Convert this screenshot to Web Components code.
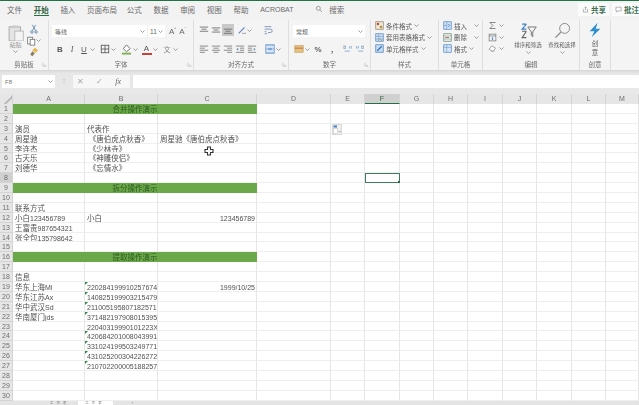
<!DOCTYPE html>
<html lang="zh">
<head>
<meta charset="utf-8">
<title>Excel</title>
<style>
	html, body { margin: 0; padding: 0; background: #fff; }
</style>
</head>
<body>
<excel-app></excel-app>
<script>
// icons used in the ribbon, all on a 12x12 box
const ICONS = {
	paste: '<rect x="1.5" y="2" width="8" height="10" fill="#e4e4e4" stroke="#aaa" stroke-width=".7"/><rect x="3.5" y="1" width="4" height="2" fill="#ccc"/><rect x="5.5" y="5" width="6" height="7" fill="#f4f4f4" stroke="#bbb" stroke-width=".7"/>',
	cut: '<path d="M4 1l4 7M8 1L4 8" stroke="#5a7fa8" fill="none"/><circle cx="3.5" cy="9.5" r="1.5" fill="none" stroke="#5a7fa8"/><circle cx="8.5" cy="9.5" r="1.5" fill="none" stroke="#5a7fa8"/>',
	copy: '<rect x="2" y="1.5" width="6" height="8" fill="#fff" stroke="#777"/><rect x="5" y="4" width="5.5" height="7" fill="#fff" stroke="#777"/>',
	brush: '<path d="M7 1l4 3-3 3-4-3z" fill="#e8b84a"/><path d="M4 5l3 2.5L4 11 1.5 9z" fill="#8a7d5c"/>',
	launch: '<path d="M2 2v8h8" fill="none" stroke="#999" stroke-width="1"/><path d="M6 6l4 4" stroke="#999"/>',
	border: '<rect x="1.5" y="1.5" width="9" height="9" fill="none" stroke="#555"/><path d="M6 1.5v9M1.5 6h9" stroke="#555"/>',
	fill: '<path d="M6 1l4 4-4 3.5L2.500 5z" fill="#fff" stroke="#666"/><rect x="1" y="9.500" width="10" height="2" fill="#7fb24f"/>',
	top: '<path d="M1 2.500h10M3 5h6M1 7.500h10" stroke="#666"/>',
	mid: '<path d="M1 3.500h10M3 6h6M1 8.500h10" stroke="#666"/>',
	bot: '<path d="M1 5h10M3 7.500h6M1 10h10" stroke="#666"/>',
	orient: '<path d="M2 10l7-7" stroke="#6c8fbf" stroke-width="1.500"/><path d="M6 10h5" stroke="#999"/>',
	wrap: '<path d="M2 2h8M2 5h7a1.500 1.500 0 010 4H6M2 8h2M2 10.500h3" stroke="#6a87a8" fill="none"/>',
	left: '<path d="M1 2.500h10M1 5h6M1 7.500h10M1 10h6" stroke="#777"/>',
	center: '<path d="M1 2.500h10M3 5h6M1 7.500h10M3 10h6" stroke="#777"/>',
	right: '<path d="M1 2.500h10M5 5h6M1 7.500h10M5 10h6" stroke="#777"/>',
	indl: '<path d="M1 2.500h10M6 5h5M6 7.500h5M1 10h10" stroke="#777"/><path d="M4 4.500L1.500 6.200 4 8z" fill="#6c8fbf"/>',
	indr: '<path d="M1 2.500h10M1 5h5M1 7.500h5M1 10h10" stroke="#777"/><path d="M8 4.500l2.500 1.700L8 8z" fill="#6c8fbf"/>',
	merge: '<rect x="1" y="1" width="10" height="10" fill="#bcd3ee" stroke="#5a8ac6"/><path d="M3.500 6h5" stroke="#2d6db5"/><path d="M1 3.500h10M1 8.500h10" stroke="#fff"/>',
	money: '<rect x="1" y="2" width="10" height="8" fill="#e3c27a" stroke="#b68f3e" stroke-width=".6"/><path d="M1 5h10" stroke="#c55" stroke-width="1"/>',
	dec1: '<path d="M8 2.500v3M10 2.500v3M2 8.500h6" stroke="#7aa5c9"/><rect x="1" y="2.500" width="2" height="3" fill="none" stroke="#9ab"/>',
	dec2: '<path d="M2 2.500v3M4 2.500v3M10 8.500H4" stroke="#7aa5c9"/><rect x="8" y="2.500" width="2" height="3" fill="none" stroke="#9ab"/>',
	cond: '<rect x="1" y="1" width="10" height="10" fill="#f2ead8" stroke="#8f8468"/><rect x="2.500" y="2.500" width="3" height="3" fill="#b4503f"/><rect x="6.500" y="6.500" width="3" height="3" fill="#a9903f"/>',
	table: '<rect x="1" y="1" width="10" height="10" fill="#d2e2f3" stroke="#5a8ac6"/><path d="M1 4.500h10M1 8h10M5 1v10" stroke="#5a8ac6" stroke-width=".7"/><path d="M6 7l4 4" stroke="#b08a3c"/>',
	cstyle: '<rect x="1" y="1" width="10" height="10" fill="#c7dcf2" stroke="#4f86c6"/><path d="M3 9l6-6" stroke="#2d6db5" stroke-width="1.500"/>',
	ins: '<rect x="1" y="1" width="10" height="10" fill="#cfe2f5" stroke="#5a8ac6"/><path d="M5 1v10M1 6h4" stroke="#5a8ac6" stroke-width=".7"/><path d="M7 4l2 2-2 2" stroke="#2d6db5" fill="none"/>',
	del: '<rect x="1" y="1" width="10" height="10" fill="#eef2f0" stroke="#6e8f7a"/><path d="M1 4h10M1 8h10" stroke="#6e8f7a" stroke-width=".7"/><path d="M3 6h5" stroke="#b5473a"/>',
	fmt: '<rect x="1" y="1" width="10" height="10" fill="#d9e8f6" stroke="#5a8ac6"/><path d="M5 1v10M1 4.500h10" stroke="#5a8ac6" stroke-width=".7"/>',
	sigma: '<path d="M10 2H2.500l4 4-4 4H10" fill="none" stroke="#666" stroke-width="1"/>',
	down: '<rect x="1.500" y="1.500" width="9" height="9" fill="#f8f8f8" stroke="#777"/><path d="M1.500 4h9" stroke="#777"/><path d="M6 5.500v3M4.800 7.500L6 9l1.200-1.500" stroke="#3f7fc0" fill="none"/>',
	clear: '<path d="M5 2.500l5 3-3.500 4.500-5-3z" fill="#fff" stroke="#888"/><path d="M3.500 9.500h5" stroke="#aaa"/>',
	sort: '<path d="M1.500 1.500h3M4.500 1.500l-3 3.500h3" fill="none" stroke="#3f7fc0" stroke-width=".8"/><path d="M1.500 6.500h3M4.500 6.500l-3 4.500h3" fill="none" stroke="#666" stroke-width=".8"/><path d="M5.500 3.500h6L9 7v3.500L8 9.500V7z" fill="none" stroke="#777" stroke-width=".7"/>',
	find: '<circle cx="7.500" cy="4.500" r="3.500" fill="none" stroke="#8a8a8a" stroke-width=".7"/><path d="M5 7l-4 4" stroke="#8a8a8a" stroke-width=".9"/>',
	bolt: '<path d="M8 .5L2 7h3.500L3.500 11.500 10 5H6.500z" fill="#2b8fd0"/>',
	search: '<circle cx="5" cy="5" r="3" fill="none" stroke="#777"/><path d="M7 7l3.500 3.500" stroke="#777"/>',
	share: '<path d="M2.500 5v5.500h7V5" fill="none" stroke="#888"/><path d="M6 7.500V1.500M4 3.500l2-2 2 2" fill="none" stroke="#888"/>',
	note: '<path d="M1.500 2h9v6.500H5L3 10.500v-2H1.500z" fill="none" stroke="#888"/>'
};

class rbIcon extends HTMLElement {
	connectedCallback() {
		let size = this.getAttribute('size') || 11;
		let shadow = this.attachShadow({mode : 'open'});
		shadow.innerHTML =
			`<style>
				:host { display: inline-flex; flex: none; }
				svg { display: block; }
			</style>
			<svg width="${size}" height="${size}" viewBox="0 0 12 12">${ICONS[this.getAttribute('name')] || ''}</svg>`;
	}
}
customElements.define('rb-icon', rbIcon);

// small dropdown arrow
class rbCaret extends HTMLElement {
	constructor() {
		super();
		let shadow = this.attachShadow({mode : 'open'});
		shadow.innerHTML =
			`<style>
				:host { display: inline-flex; flex: none; width: 5px; height: 5px; align-items: center; justify-content: center; }
			</style>
			<svg width="5" height="3" viewBox="0 0 5 3"><path d="M.5.5L2.500 2.500 4.500.5" fill="none" stroke="#888" stroke-width=".8"/></svg>`;
	}
}
customElements.define('rb-caret', rbCaret);

// a ribbon group: content on top, label + launcher on the bottom line
class rbGroup extends HTMLElement {
	constructor() {
		super();
		let shadow = this.attachShadow({mode : 'open'});
		shadow.innerHTML =
			`<style>
				:host {
					display: flex;
					flex-direction: column;
					flex: none;
					box-sizing: border-box;
					height: 50px;
					border-right: 1px solid #dedede;
					position: relative;
				}
				#body { flex: 1; display: flex; flex-direction: column; min-height: 0; }
				#label {
					height: 11px;
					line-height: 10px;
					font-size: 6.5px;
					text-align: center;
					color: #6c6c6c;
				}
				#launch { position: absolute; right: 1px; bottom: 3px; display: none; }
				:host([launch]) #launch { display: block; }
			</style>
			<div id="body"><slot></slot></div>
			<div id="label"></div>
			<rb-icon id="launch" name="launch" size="5"></rb-icon>`;
		shadow.getElementById('label').textContent = this.getAttribute('label');
	}
}
customElements.define('rb-group', rbGroup);

class ribbonBar extends HTMLElement {
	constructor() {
		super();
		let shadow = this.attachShadow({mode : 'open'});
		shadow.innerHTML =
			`<style>
				:host {
					display: flex;
					flex: none;
					height: 50px;
					background: #f4f4f4;
					font-size: 6.5px;
					color: #5c5c5c;
				}
				.row { display: flex; align-items: center; }
				.col { display: flex; flex-direction: column; align-items: center; }
				.box { background: #fff; display: flex; align-items: center; height: 12px; box-sizing: border-box; color: #666; }
				.b { font: bold 8px "Liberation Sans", sans-serif; color: #555; }
				.big-a { font: 8px "Liberation Sans", sans-serif; color: #666; }
				.sel { background: #c9c9c9; }
				.cell { width: 12px; height: 12px; display: flex; justify-content: center; align-items: center; }
				.st { height: 11.500px; gap: 2px; }
			</style>

			<rb-group label="剪贴板" launch style="width:49px">
				<div class="row" style="align-items:flex-start;padding:4px 0 0 7px">
					<div class="col" style="width:17px;color:#999">
						<rb-icon name="paste" size="17"></rb-icon>
						<span style="font-size:6px;line-height:8px">粘贴</span>
						<rb-caret></rb-caret>
					</div>
					<div class="col" style="width:13px;margin-left:3px;gap:1.500px">
						<rb-icon name="cut" size="10"></rb-icon>
						<div class="row"><rb-icon name="copy" size="10"></rb-icon><rb-caret></rb-caret></div>
						<rb-icon name="brush" size="10"></rb-icon>
					</div>
				</div>
			</rb-group>

			<rb-group label="字体" launch style="width:145px">
				<div class="row" style="padding:5px 0 0 3px">
					<div class="box" style="width:95px;padding:0 2px 0 3px;justify-content:space-between"><span style="font-size:6px">等线</span><rb-caret></rb-caret></div>
					<div class="box" style="width:18px;padding:0 2px;justify-content:space-between;border-left:1px solid #eee"><span style="font:6.500px 'Liberation Sans',sans-serif">11</span><rb-caret></rb-caret></div>
					<span class="big-a" style="margin-left:4px">A<sup style="font-size:4px">^</sup></span>
					<span class="big-a" style="margin-left:3px">A<sup style="font-size:4px">ˇ</sup></span>
				</div>
				<div class="row" style="padding:6px 0 0 5px">
					<span class="b cell">B</span>
					<span class="cell" style="font:italic 8px 'Liberation Serif',serif;color:#555">I</span>
					<span class="cell" style="font:8px 'Liberation Sans',sans-serif;text-decoration:underline;color:#555">U</span>
					<rb-caret></rb-caret>
					<rb-icon name="border" size="10" style="margin-left:5px"></rb-icon>
					<rb-caret style="margin-left:1px"></rb-caret>
					<rb-icon name="fill" size="11" style="margin-left:5px"></rb-icon>
					<rb-caret style="margin-left:1px"></rb-caret>
					<div class="col" style="margin-left:3px;width:11px;line-height:8px"><span style="font:8px 'Liberation Sans',sans-serif;color:#555">A</span><span style="width:10px;height:2px;background:#c8423b"></span></div>
					<rb-caret style="margin-left:1px"></rb-caret>
					<span class="cell" style="margin-left:3px;font-size:7px;color:#888">文</span>
					<rb-caret></rb-caret>
				</div>
			</rb-group>

			<rb-group label="对齐方式" launch style="width:95px">
				<div class="row" style="padding:4px 0 0 4px">
					<div class="cell"><rb-icon name="top" size="10"></rb-icon></div>
					<div class="cell"><rb-icon name="mid" size="10"></rb-icon></div>
					<div class="cell sel"><rb-icon name="bot" size="10"></rb-icon></div>
					<rb-icon name="orient" size="10" style="margin-left:3px"></rb-icon><rb-caret></rb-caret>
					<rb-icon name="wrap" size="10" style="margin-left:11px"></rb-icon>
				</div>
				<div class="row" style="padding:7px 0 0 4px">
					<div class="cell"><rb-icon name="left" size="10"></rb-icon></div>
					<div class="cell"><rb-icon name="center" size="10"></rb-icon></div>
					<div class="cell"><rb-icon name="right" size="10"></rb-icon></div>
					<div class="cell"><rb-icon name="indl" size="10"></rb-icon></div>
					<div class="cell"><rb-icon name="indr" size="10"></rb-icon></div>
					<rb-icon name="merge" size="10" style="margin-left:7px"></rb-icon><rb-caret style="margin-left:1px"></rb-caret>
				</div>
			</rb-group>

			<rb-group label="数字" launch style="width:82px">
				<div class="row" style="padding:5px 0 0 4px">
					<div class="box" style="width:72px;padding:0 2px 0 3px;justify-content:space-between"><span style="font-size:6px">常规</span><rb-caret></rb-caret></div>
				</div>
				<div class="row" style="padding:6px 0 0 5px">
					<rb-icon name="money" size="10"></rb-icon><rb-caret style="margin-left:1px"></rb-caret>
					<span class="cell" style="font:bold 8px 'Liberation Sans',sans-serif;color:#666;margin-left:2px">%</span>
					<span class="cell" style="font:bold 9px 'Liberation Serif',serif;color:#555;margin-left:2px">,</span>
					<rb-icon name="dec1" size="10" style="margin-left:5px"></rb-icon>
					<rb-icon name="dec2" size="10" style="margin-left:2px"></rb-icon>
				</div>
			</rb-group>

			<rb-group label="样式" style="width:68px">
				<div class="col" style="align-items:flex-start;padding:0 0 0 4px">
					<div class="row st"><rb-icon name="cond" size="9"></rb-icon><span>条件格式</span><rb-caret></rb-caret></div>
					<div class="row st"><rb-icon name="table" size="9"></rb-icon><span>套用表格格式</span><rb-caret></rb-caret></div>
					<div class="row st"><rb-icon name="cstyle" size="9"></rb-icon><span>单元格样式</span><rb-caret></rb-caret></div>
				</div>
			</rb-group>

			<rb-group label="单元格" style="width:44px">
				<div class="col" style="align-items:flex-start;padding:0 0 0 4px">
					<div class="row st"><rb-icon name="ins" size="9"></rb-icon><span>插入</span><rb-caret style="margin-left:5px"></rb-caret></div>
					<div class="row st"><rb-icon name="del" size="9"></rb-icon><span>删除</span><rb-caret style="margin-left:5px"></rb-caret></div>
					<div class="row st"><rb-icon name="fmt" size="9"></rb-icon><span>格式</span><rb-caret></rb-caret></div>
				</div>
			</rb-group>

			<rb-group label="编辑" style="width:97px">
				<div class="row" style="align-items:flex-start;padding:0 0 0 5px">
					<div class="col" style="align-items:flex-start">
						<div class="row st"><rb-icon name="sigma" size="9"></rb-icon><rb-caret></rb-caret></div>
						<div class="row st"><rb-icon name="down" size="9"></rb-icon><rb-caret></rb-caret></div>
						<div class="row st"><rb-icon name="clear" size="9"></rb-icon><rb-caret></rb-caret></div>
					</div>
					<div class="col" style="width:36px;margin-left:7px;padding-top:2px">
						<rb-icon name="sort" size="17"></rb-icon>
						<span style="font-size:5.500px;line-height:10px;white-space:nowrap;margin-top:1px">排序和筛选</span>
						<rb-caret></rb-caret>
					</div>
					<div class="col" style="width:36px;padding-top:2px">
						<rb-icon name="find" size="17"></rb-icon>
						<span style="font-size:5.500px;line-height:10px;white-space:nowrap;margin-top:1px">查找和选择</span>
						<rb-caret></rb-caret>
					</div>
				</div>
			</rb-group>

			<rb-group label="创意" style="width:31px">
				<div class="col" style="padding-top:2px">
					<rb-icon name="bolt" size="16"></rb-icon>
					<span style="line-height:8.500px;margin-top:1px">创</span>
					<span style="line-height:8.500px">意</span>
				</div>
			</rb-group>`;
	}
}
customElements.define('ribbon-bar', ribbonBar);

class menuTabs extends HTMLElement {
	constructor() {
		super();
		let shadow = this.attachShadow({mode : 'open'});
		shadow.innerHTML =
			`<style>
				:host {
					display: flex;
					flex: none;
					align-items: center;
					box-sizing: border-box;
					height: 20px;
					border-top: 1.500px solid #217346;
					padding: 0 0 3px 7px;
					gap: 11.700px;
					background: #f2f2f2;
					font-size: 7.500px;
					color: #6a6a6a;
				}
				span { position: relative; white-space: nowrap; }
				.on { font-weight: bold; color: #2f5f3e; }
				.on::after { content: ""; position: absolute; left: 0; right: 0; top: 11px; height: 1.500px; background: #217346; }
				.en { font-family: "Liberation Sans", sans-serif; font-size: 7px; }
				#search { display: flex; align-items: center; gap: 6px; margin-left: 10px; }
				#right { margin-left: auto; display: flex; align-items: center; gap: 3px; }
				.act { background: #fbfbfb; height: 13px; display: flex; align-items: center; gap: 2px; padding: 0 3px; font-weight: bold; color: #3f6f52; }
			</style>
			<span>文件</span>
			<span class="on">开始</span>
			<span>插入</span>
			<span style="margin-right:-2px">页面布局</span>
			<span>公式</span>
			<span>数据</span>
			<span>审阅</span>
			<span>视图</span>
			<span>帮助</span>
			<span class="en">ACROBAT</span>
			<span id="search"><rb-icon name="search" size="8"></rb-icon><span>搜索</span></span>
			<div id="right">
				<div class="act" style="padding-left:4px"><rb-icon name="share" size="7"></rb-icon>共享</div>
				<div class="act" style="padding-right:0"><rb-icon name="note" size="7"></rb-icon>批注</div>
			</div>`;
	}
}
customElements.define('menu-tabs', menuTabs);

class formulaBar extends HTMLElement {
	constructor() {
		super();
		let shadow = this.attachShadow({mode : 'open'});
		shadow.innerHTML =
			`<style>
				:host {
					display: flex;
					flex: none;
					box-sizing: border-box;
					height: 24px;
					padding: 5px 0 6px 2px;
					align-items: stretch;
					background: linear-gradient(#d6d6d6 0, #e6e6e6 3px, #e9e9e9 100%);
					font-family: "Liberation Sans", sans-serif;
					color: #777;
				}
				#name { width: 53px; background: #fff; display: flex; align-items: center; justify-content: space-between; padding: 0 2px 0 3px; box-sizing: border-box; font-size: 6px; }
				#dots { width: 18px; text-align: center; font-size: 6px; line-height: 12px; color: #aaa; }
				#btns { width: 57px; background: #f7f7f7; display: flex; align-items: center; justify-content: space-between; font-size: 8px; color: #aaa; padding: 0 9px 0 4px; box-sizing: border-box; }
				#input { flex: 1; background: #fff; margin-left: 3px; }
				i { font-family: "Liberation Serif", serif; color: #666; }
			</style>
			<div id="name"><span>F8</span><rb-caret></rb-caret></div>
			<div id="dots">⋮</div>
			<div id="btns"><span>✕</span><span>✓</span><i>fx</i></div>
			<div id="input"></div>`;
	}
}
customElements.define('formula-bar', formulaBar);

const COL_W = [13, 72, 73, 99, 74, 34, 35, 34, 34, 35, 34, 35, 34, 33];
const COL_N = ['', 'A', 'B', 'C', 'D', 'E', 'F', 'G', 'H', 'I', 'J', 'K', 'L', 'M'];
const TITLES = {1: '合并操作演示', 9: '拆分操作演示', 16: '提取操作演示'};
const DATA = {
	3: ['演员', '代表作'],
	4: ['周星驰', ' 《唐伯虎点秋香》', '周星驰《唐伯虎点秋香》'],
	5: ['李连杰', ' 《少林寺》'],
	6: ['古天乐', ' 《神雕侠侣》'],
	7: ['刘德华', ' 《忘情水》'],
	11: ['联系方式'],
	12: ['小白123456789', '小白', '>123456789'],
	13: ['王富贵987654321'],
	14: ['张全包135798642'],
	18: ['信息'],
	19: ['华东上海Mi', '^220284199910257674', '>1999/10/25'],
	20: ['华东江苏Ax', '^140825199903215479'],
	21: ['华中武汉Sd', '^211005195807182571'],
	22: ['华南厦门jds', '^371482197908015395'],
	23: ['', '22040319990101223X'],
	24: ['', '^420684201008043991'],
	25: ['', '^331024199503249771'],
	26: ['', '^431025200304226272'],
	27: ['', '^210702200005188257']
};

class sheetGrid extends HTMLElement {
	constructor() {
		super();
		let shadow = this.attachShadow({mode : 'open'});
		let html = '';
		COL_N.forEach((n, i) => {
			let cls = i == 0 ? 'hd corner' : (n == 'F' ? 'hd picked' : 'hd');
			html += `<div class="${cls}">${n}</div>`;
		});
		for (let r = 1; r <= 30; r++) {
			html += `<div class="hd rn${r == 8 ? ' picked-r' : ''}">${r}</div>`;
			let start = 1;
			if (TITLES[r]) {
				html += `<div class="c title" style="grid-column: span 3">${TITLES[r]}</div>`;
				start = 4;
			}
			for (let c = start; c <= 13; c++) {
				let txt = (DATA[r] && DATA[r][c - 1]) || '';
				let cls = 'c';
				if (txt[0] == '>') { cls += ' num'; txt = txt.slice(1); }
				if (txt[0] == '^') { cls += ' tri'; txt = txt.slice(1); }
				if (r == 8 && c == 6) cls += ' sel';
				// latin and digits are a little narrower than the CJK text
				txt = txt.replace(/[\x21-\x7e]+/g, m => `<span class="l">${m}</span>`);
				html += `<div class="${cls}">${txt}</div>`;
			}
		}
		shadow.innerHTML =
			`<style>
				:host { display: block; flex: none; position: relative; background: #fff; }
				#grid {
					display: grid;
					grid-template-columns: ${COL_W.map(w => w + 'px').join(' ')};
					grid-template-rows: 10px repeat(30, 9.900px);
				}
				.hd {
					background: #e6e6e6;
					font: 7px/10px "Liberation Sans", sans-serif;
					color: #6e6e6e;
					text-align: center;
					border-right: 1px solid #d4d4d4;
					box-sizing: border-box;
					overflow: hidden;
				}
				.rn { border-bottom: 1px solid #d4d4d4; line-height: 9px; }
				.corner { background: linear-gradient(135deg, #e6e6e6 60%, #bdbdbd 60%, #bdbdbd 75%, #e6e6e6 75%); }
				.picked { background: #d0d0d0; border-bottom: 1px solid #217346; color: #2f5f3e; }
				.picked-r { background: #d0d0d0; }
				.c {
					position: relative;
					box-sizing: border-box;
					border-right: 1px solid #e6e6e6;
					border-bottom: 1px solid #efefef;
					font-size: 7.500px;
					line-height: 9.500px;
					color: #505050;
					padding-left: 2px;
					white-space: pre;
					overflow: hidden;
				}
				.l { font-family: "Liberation Sans", sans-serif; font-size: 7px; }
				.title { background: #6aa84a; color: #2d5a1c; text-align: center; padding: 0; border: 0; }
				.num { text-align: right; padding: 0 1px 0 0; }
				.tri::before {
					content: "";
					position: absolute;
					left: 0;
					top: 0;
					border-top: 3px solid #2f8a4a;
					border-right: 3px solid transparent;
				}
				.sel { outline: 1.500px solid #3f7a5a; outline-offset: -1px; z-index: 2; overflow: visible; }
				.sel::after { content: ""; position: absolute; right: -1px; bottom: -1px; width: 2px; height: 2px; background: #217346; }
				#paste {
					position: absolute;
					left: 332px;
					top: 30px;
					width: 10px;
					height: 11px;
				}
				#cursor { position: absolute; left: 204px; top: 52px; }
			</style>
			<div id="grid">${html}</div>
			<svg id="paste" viewBox="0 0 10 11">
				<rect x=".5" y=".5" width="9" height="10" fill="#f1f1f1" stroke="#d9d9d9"/>
				<rect x="1.500" y="1.500" width="3.500" height="2" fill="#3f7fc0"/>
				<rect x="1.500" y="4.500" width="4" height="5" fill="#fff" stroke="#bbb" stroke-width=".5"/>
				<path d="M6.500 7l1.200 1.200L9 7" fill="none" stroke="#777" stroke-width=".6"/>
			</svg>
			<svg id="cursor" width="10" height="10" viewBox="0 0 10 10">
				<path d="M3.500 1h3v2.500H9v3H6.500V9h-3V6.500H1v-3h2.500z" fill="#fff" stroke="#333" stroke-width="1.100"/>
			</svg>`;
	}
}
customElements.define('sheet-grid', sheetGrid);

class sheetTabs extends HTMLElement {
	constructor() {
		super();
		let shadow = this.attachShadow({mode : 'open'});
		shadow.innerHTML =
			`<style>
				:host {
					display: flex;
					flex: 1;
					min-height: 0;
					background: #e4e4e4;
					overflow: hidden;
					align-items: flex-end;
					font-size: 3.500px;
					line-height: 4px;
					letter-spacing: 3px;
					color: #777;
					padding-left: 50px;
				}
				span { flex: none; }
				.on { background: #fff; margin-left: 8px; width: 35px; text-align: center; }
				.add { margin-left: 19px; }
			</style>
			<span>工作表</span>
			<span class="on">工作表</span>
			<span class="add">+</span>`;
	}
}
customElements.define('sheet-tabs', sheetTabs);

class excelApp extends HTMLElement {
	constructor() {
		super();
		let shadow = this.attachShadow({mode : 'open'});
		shadow.innerHTML =
			`<style>
				:host {
					display: flex;
					flex-direction: column;
					width: 639px;
					height: 405px;
					overflow: hidden;
					font-family: "Noto Sans CJK SC", "Liberation Sans", sans-serif;
					filter: blur(.45px);
				}
			</style>
			<menu-tabs></menu-tabs>
			<ribbon-bar></ribbon-bar>
			<formula-bar></formula-bar>
			<sheet-grid></sheet-grid>
			<sheet-tabs></sheet-tabs>`;
	}
}
customElements.define('excel-app', excelApp);
</script>
</body>
</html>
